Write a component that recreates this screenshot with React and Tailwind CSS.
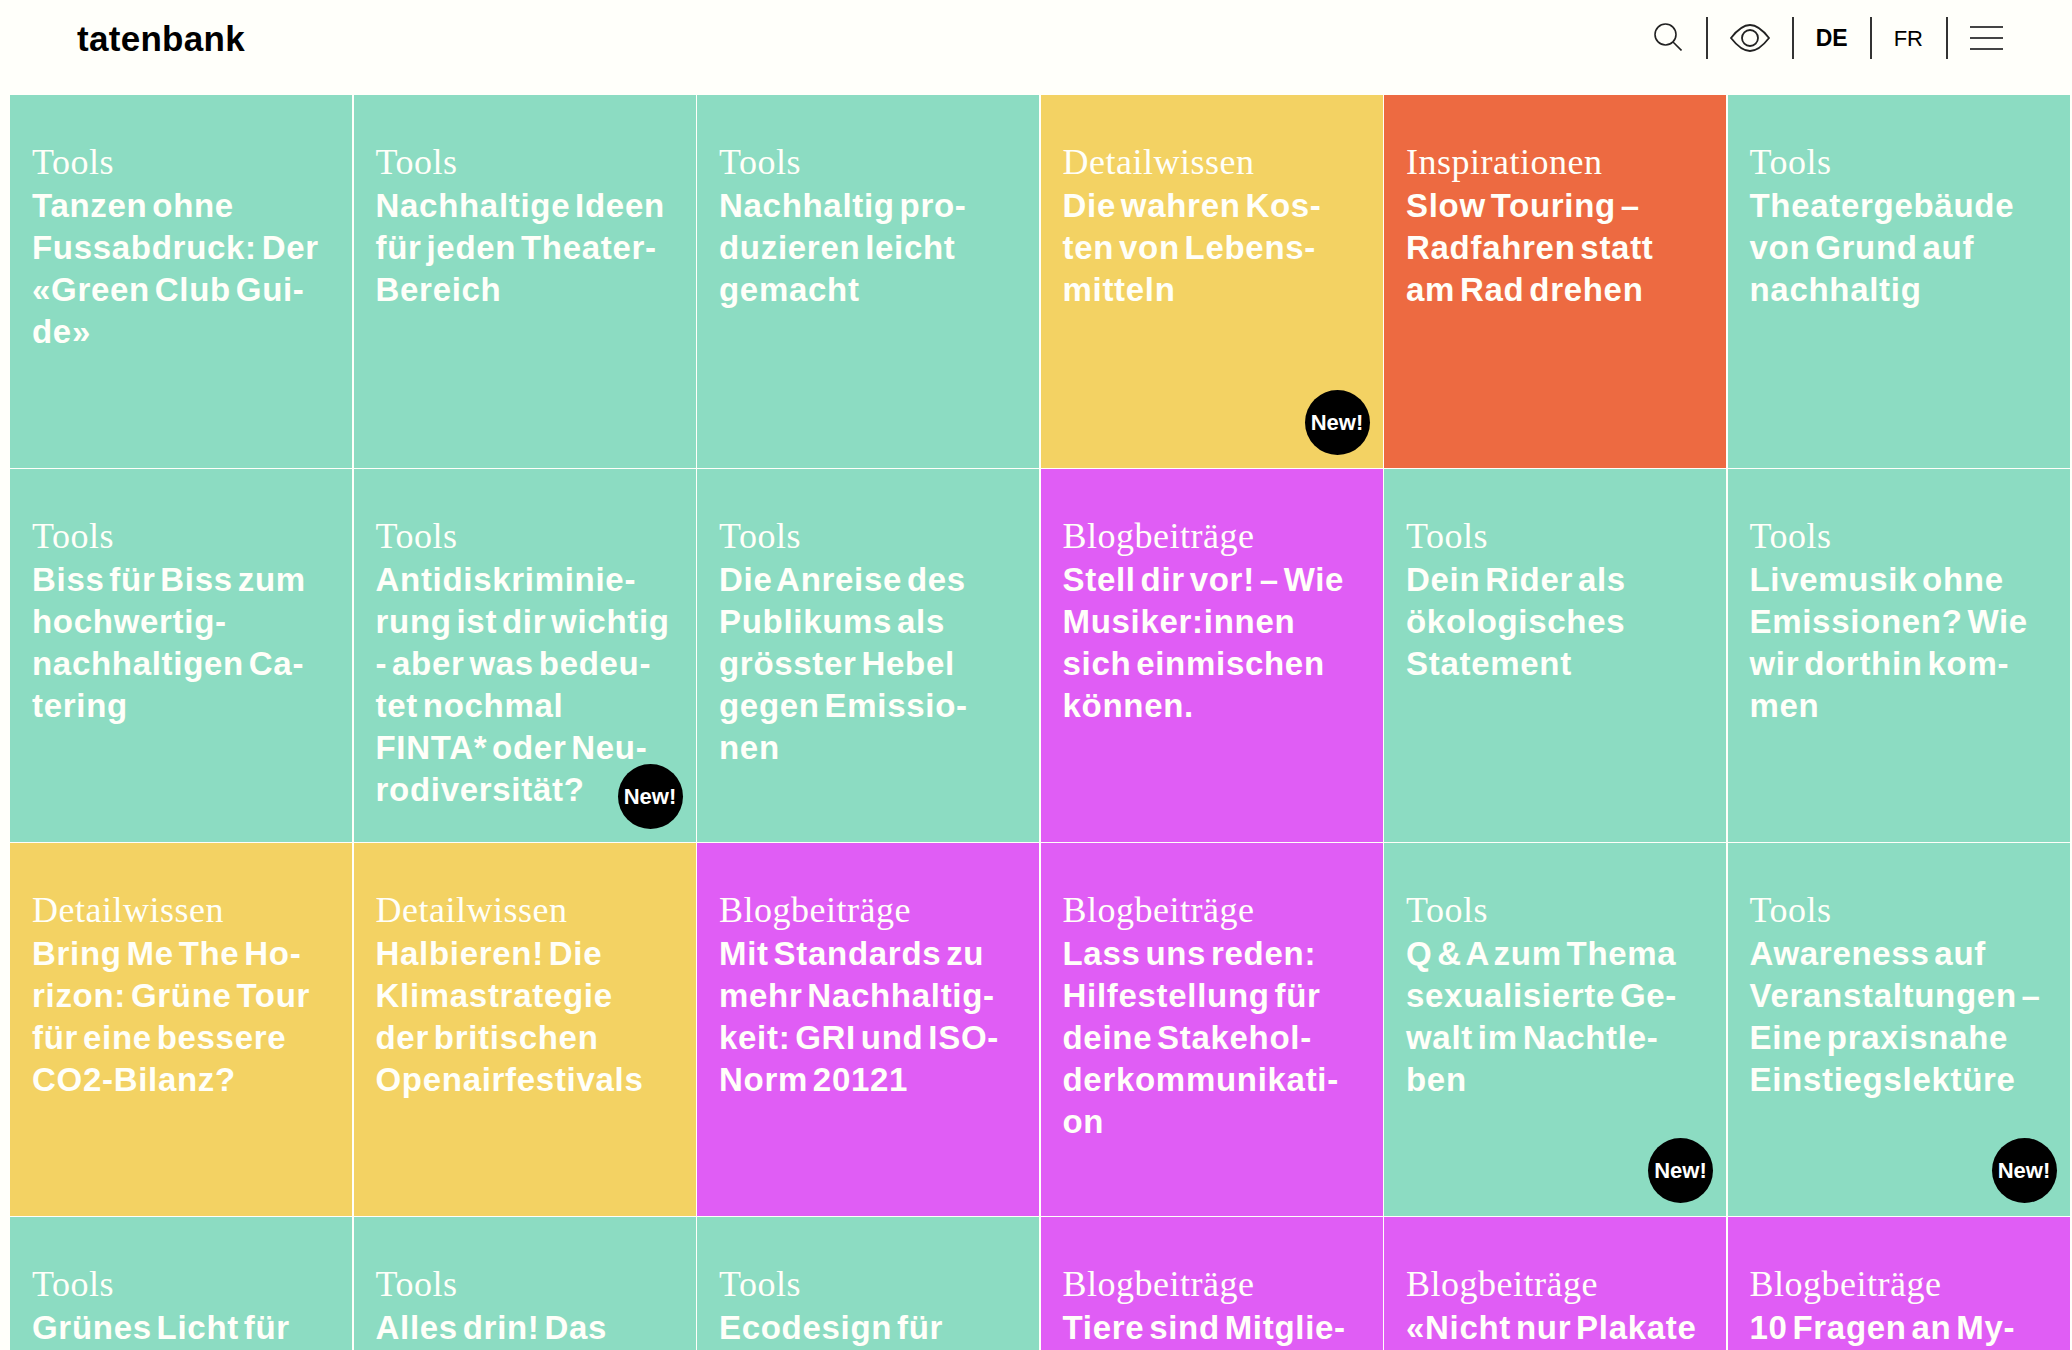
const TEAL = 'bg-[#8cdcc2]';
const YELLOW = 'bg-[#f3d263]';
const PINK = 'bg-[#e05df5]';
const ORANGE = 'bg-[#ed6a41]';

const cards = [
  { label: 'Tools', color: TEAL, lines: ['Tanzen ohne', 'Fussabdruck: Der', '«Green Club Gui-', 'de»'] },
  { label: 'Tools', color: TEAL, lines: ['Nachhaltige Ideen', 'für jeden Theater-', 'Bereich'] },
  { label: 'Tools', color: TEAL, lines: ['Nachhaltig pro-', 'duzieren leicht', 'gemacht'] },
  { label: 'Detailwissen', color: YELLOW, isNew: true, lines: ['Die wahren Kos-', 'ten von Lebens-', 'mitteln'] },
  { label: 'Inspirationen', color: ORANGE, lines: ['Slow Touring –', 'Radfahren statt', 'am Rad drehen'] },
  { label: 'Tools', color: TEAL, lines: ['Theatergebäude', 'von Grund auf', 'nachhaltig'] },
  { label: 'Tools', color: TEAL, lines: ['Biss für Biss zum', 'hochwertig-', 'nachhaltigen Ca-', 'tering'] },
  { label: 'Tools', color: TEAL, isNew: true, lines: ['Antidiskriminie-', 'rung ist dir wichtig', '- aber was bedeu-', 'tet nochmal', 'FINTA* oder Neu-', 'rodiversität?'] },
  { label: 'Tools', color: TEAL, lines: ['Die Anreise des', 'Publikums als', 'grösster Hebel', 'gegen Emissio-', 'nen'] },
  { label: 'Blogbeiträge', color: PINK, lines: ['Stell dir vor! – Wie', 'Musiker:innen', 'sich einmischen', 'können.'] },
  { label: 'Tools', color: TEAL, lines: ['Dein Rider als', 'ökologisches', 'Statement'] },
  { label: 'Tools', color: TEAL, lines: ['Livemusik ohne', 'Emissionen? Wie', 'wir dorthin kom-', 'men'] },
  { label: 'Detailwissen', color: YELLOW, lines: ['Bring Me The Ho-', 'rizon: Grüne Tour', 'für eine bessere', 'CO2-Bilanz?'] },
  { label: 'Detailwissen', color: YELLOW, lines: ['Halbieren! Die', 'Klimastrategie', 'der britischen', 'Openairfestivals'] },
  { label: 'Blogbeiträge', color: PINK, lines: ['Mit Standards zu', 'mehr Nachhaltig-', 'keit: GRI und ISO-', 'Norm 20121'] },
  { label: 'Blogbeiträge', color: PINK, lines: ['Lass uns reden:', 'Hilfestellung für', 'deine Stakehol-', 'derkommunikati-', 'on'] },
  { label: 'Tools', color: TEAL, isNew: true, lines: ['Q & A zum Thema', 'sexualisierte Ge-', 'walt im Nachtle-', 'ben'] },
  { label: 'Tools', color: TEAL, isNew: true, lines: ['Awareness auf', 'Veranstaltungen –', 'Eine praxisnahe', 'Einstiegslektüre'] },
  { label: 'Tools', color: TEAL, lines: ['Grünes Licht für'] },
  { label: 'Tools', color: TEAL, lines: ['Alles drin! Das'] },
  { label: 'Tools', color: TEAL, lines: ['Ecodesign für'] },
  { label: 'Blogbeiträge', color: PINK, lines: ['Tiere sind Mitglie-'] },
  { label: 'Blogbeiträge', color: PINK, lines: ['«Nicht nur Plakate'] },
  { label: 'Blogbeiträge', color: PINK, lines: ['10 Fragen an My-'] },
];

const Card = ({ card }) => (
  <div className={`relative h-[372.5px] pl-[22px] pt-[46px] text-[#fffff9] ${card.color}`}>
    <div className="mb-[2px] font-['Liberation_Serif',serif] text-[36px] leading-[42px] tracking-[0.5px]">{card.label}</div>
    <div className="font-['Liberation_Sans',sans-serif] text-[33px] font-bold leading-[42px] tracking-[0.7px] [word-spacing:-5px] whitespace-nowrap">
      {card.lines.map((line, i) => (
        <div key={i}>{line}</div>
      ))}
    </div>
    {card.isNew && (
      <div className="absolute right-[13px] bottom-[13px] flex h-[65px] w-[65px] items-center justify-center rounded-full bg-black font-['Liberation_Sans',sans-serif] text-[22px] font-bold text-white">
        New!
      </div>
    )}
  </div>
);

const Divider = () => <div className="h-[42px] w-[2px] bg-[#333]" />;

const Header = () => (
  <header className="flex h-[95px] items-center justify-between pb-[19px] pl-[77px] pr-[69px] text-black">
    <div className="font-['Liberation_Sans',sans-serif] text-[35px] font-bold leading-none tracking-[0.3px]">tatenbank</div>
    <div className="flex items-center font-['Liberation_Sans',sans-serif]">
      <svg className="mt-[-2px]" width="28" height="28" viewBox="0 0 28 28" fill="none" stroke="#222" strokeWidth="1.6">
        <circle cx="11.5" cy="11.5" r="10.5" />
        <line x1="19" y1="19" x2="27.5" y2="27.5" />
      </svg>
      <div className="ml-[24px]"><Divider /></div>
      <svg className="ml-[22px]" width="40" height="28" viewBox="0 0 40 28" fill="none" stroke="#222" strokeWidth="1.8">
        <path d="M1 14C8 5 14 1 20 1s12 4 19 13c-7 9-13 13-19 13S8 23 1 14Z" />
        <circle cx="20" cy="14" r="8" />
      </svg>
      <div className="ml-[22px]"><Divider /></div>
      <div className="ml-[22px] text-[23px] font-bold">DE</div>
      <div className="ml-[22px]"><Divider /></div>
      <div className="ml-[22px] text-[22px]">FR</div>
      <div className="ml-[23px]"><Divider /></div>
      <div className="ml-[22px] flex w-[33px] flex-col gap-[9px]">
        <div className="h-[2px] bg-[#444]" />
        <div className="h-[2px] bg-[#444]" />
        <div className="h-[2px] bg-[#444]" />
      </div>
    </div>
  </header>
);

export default function App() {
  return (
    <div className="h-[1350px] overflow-hidden bg-[#fffffa]">
      <Header />
      <div className="ml-[10px] mr-[2.5px] grid grid-cols-6 gap-[1.5px]">
        {cards.map((card, i) => (
          <Card key={i} card={card} />
        ))}
      </div>
    </div>
  );
}
